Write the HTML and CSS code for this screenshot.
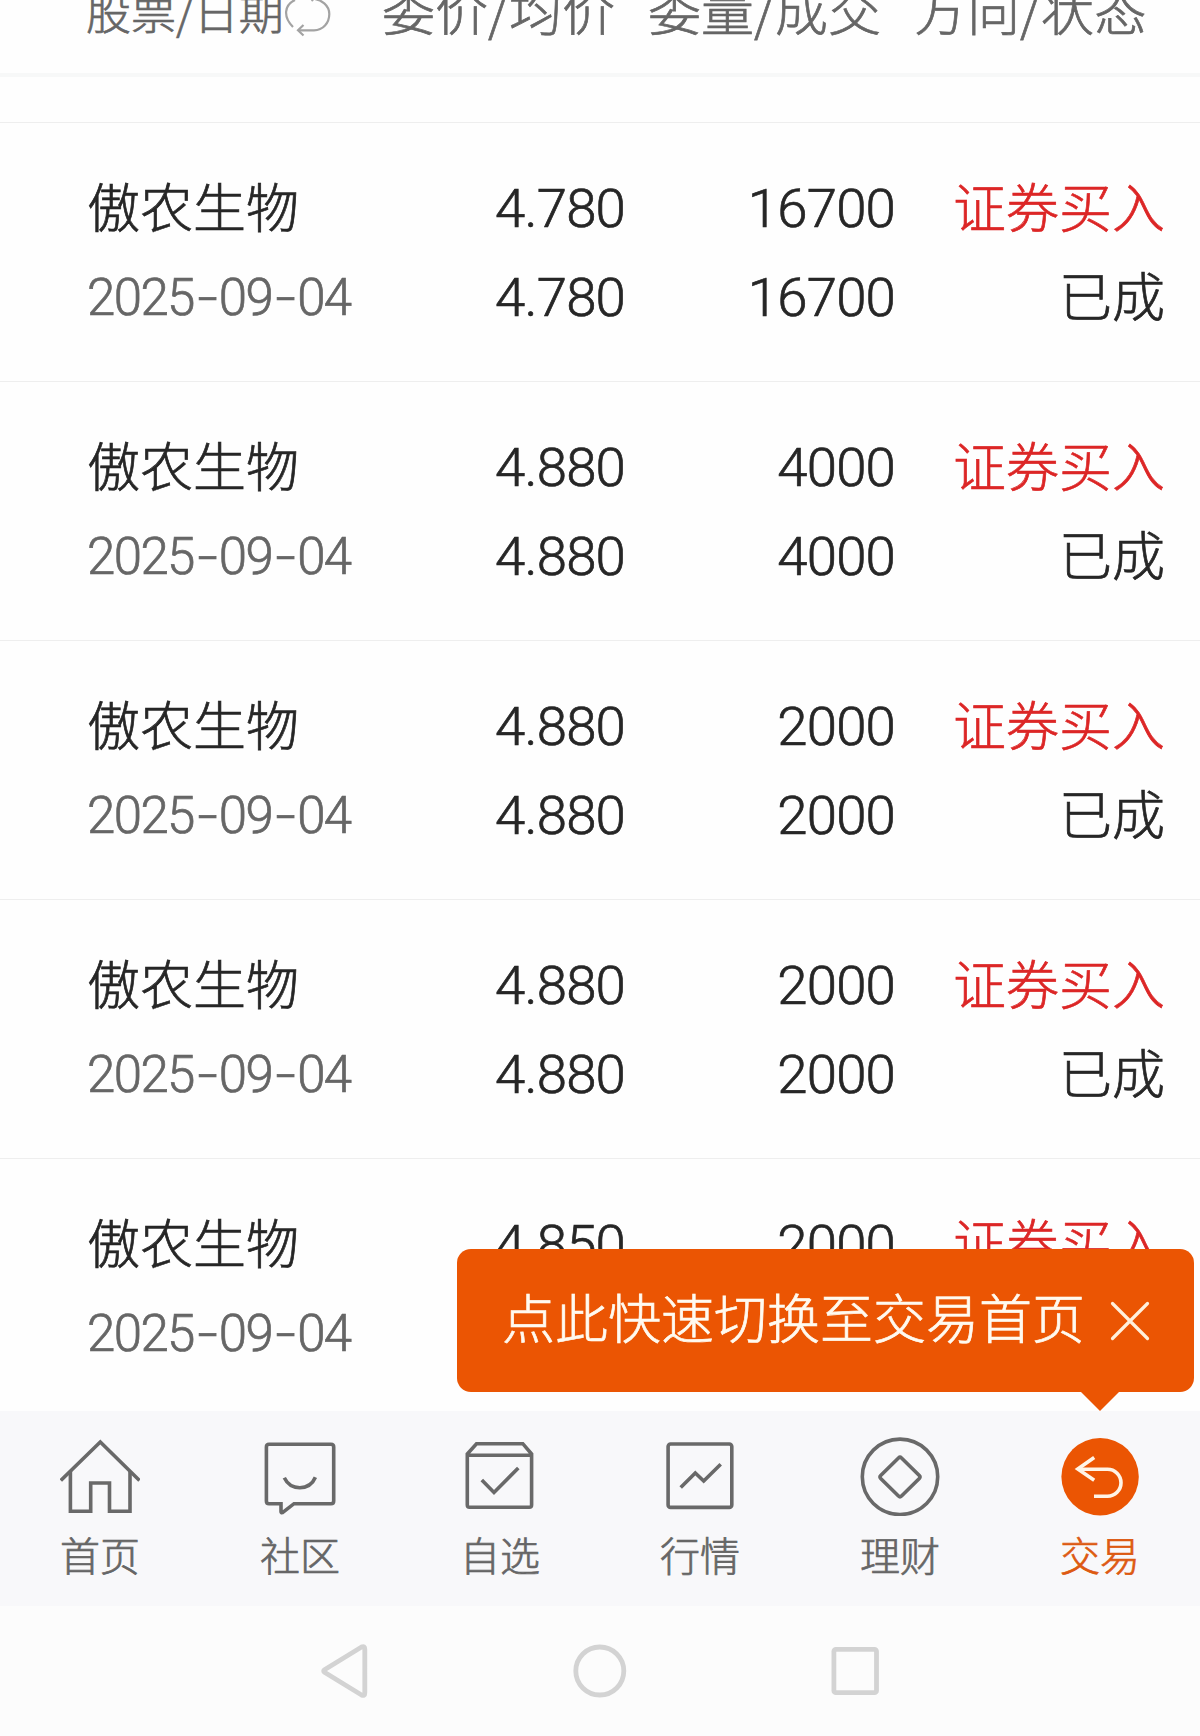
FILE: index.html
```html
<!DOCTYPE html>
<html lang="zh-CN">
<head>
	<meta charset="utf-8">
	<title>历史委托</title>
	<link rel="stylesheet" href="styles.css">
</head>
<body>
<div class="page">

	<!-- column titles -->
	<div class="list_head">
		<div class="head_stock">
			<span>股票/日期</span>
			<svg class="refresh" width="48" height="60" viewBox="0 0 48 60">
				<path d="M9 46 C-1 36 0 24 11 19"/>
				<path d="M29 20 L27 17.5 C38 18 45.3 25 45.3 33 C45.3 42 39 49.3 30 49.3 H14.5"/>
				<path d="M19.5 44 L14 49.3 L19.5 54.5"/>
			</svg>
		</div>
		<div class="head_price">委价/均价</div>
		<div class="head_count">委量/成交</div>
		<div class="head_state">方向/状态</div>
	</div>

	<!-- orders -->
	<div class="list">
		<div class="order">
			<div class="stock">傲农生物</div>
			<div class="num">4.780</div>
			<div class="num">16700</div>
			<div class="buy">证券买入</div>
			<div class="num date">2025<i>-</i>09<i>-</i>04</div>
			<div class="num">4.780</div>
			<div class="num">16700</div>
			<div>已成</div>
		</div>
		<div class="order">
			<div class="stock">傲农生物</div>
			<div class="num">4.880</div>
			<div class="num">4000</div>
			<div class="buy">证券买入</div>
			<div class="num date">2025<i>-</i>09<i>-</i>04</div>
			<div class="num">4.880</div>
			<div class="num">4000</div>
			<div>已成</div>
		</div>
		<div class="order">
			<div class="stock">傲农生物</div>
			<div class="num">4.880</div>
			<div class="num">2000</div>
			<div class="buy">证券买入</div>
			<div class="num date">2025<i>-</i>09<i>-</i>04</div>
			<div class="num">4.880</div>
			<div class="num">2000</div>
			<div>已成</div>
		</div>
		<div class="order">
			<div class="stock">傲农生物</div>
			<div class="num">4.880</div>
			<div class="num">2000</div>
			<div class="buy">证券买入</div>
			<div class="num date">2025<i>-</i>09<i>-</i>04</div>
			<div class="num">4.880</div>
			<div class="num">2000</div>
			<div>已成</div>
		</div>
		<div class="order">
			<div class="stock">傲农生物</div>
			<div class="num">4.850</div>
			<div class="num">2000</div>
			<div class="buy">证券买入</div>
			<div class="num date">2025<i>-</i>09<i>-</i>04</div>
		</div>
	</div>

	<!-- bottom tabs, the tip hangs above the last one -->
	<div class="tabs">
		<div class="tip">
			<span>点此快速切换至交易首页</span>
			<svg class="close" width="40" height="40" viewBox="0 0 40 40">
				<path d="M2.5 2.5 L37.5 37.5 M37.5 2.5 L2.5 37.5"/>
			</svg>
		</div>
		<div class="tab">
			<svg class="icon" width="80" height="80" viewBox="0 0 80 80">
				<path d="M.8 44.5 L40.3 6 L79.5 44.5"/>
				<path d="M10.4 35 V75.3 H30.7 V47 H49.5 V75.3 H70 V35"/>
			</svg>
			<span>首页</span>
		</div>
		<div class="tab">
			<svg class="icon" width="80" height="80" viewBox="0 0 80 80">
				<path d="M9 8.3 H71 Q73.7 8.3 73.7 11 V65 Q73.7 67.7 71 67.7 H34 L22.5 76.6 Q21 77 21 75.5 V67.7 H9 Q6.4 67.7 6.4 65 V11 Q6.4 8.3 9 8.3 Z"/>
				<path d="M24.3 41.7 Q29 51.5 39.8 51.7 Q51 51.5 55.4 41.2"/>
			</svg>
			<span>社区</span>
		</div>
		<div class="tab">
			<svg class="icon" width="80" height="80" viewBox="0 0 80 80">
				<path d="M7.3 18 L16.5 7.7 H62.8 L71.6 18 V69 Q71.6 71.3 69.3 71.3 H9.6 Q7.3 71.3 7.3 69 Z M7.3 19.3 H71.6"/>
				<path d="M21.8 44 L34 56.5 L58.3 32"/>
			</svg>
			<span>自选</span>
		</div>
		<div class="tab">
			<svg class="icon" width="80" height="80" viewBox="0 0 80 80">
				<rect x="8.1" y="8" width="63.7" height="63.4" rx="2.5"/>
				<path d="M20.7 51.5 L35.3 37 L43.7 45 L60.7 28.3"/>
			</svg>
			<span>行情</span>
		</div>
		<div class="tab">
			<svg class="icon" width="80" height="80" viewBox="0 0 80 80">
				<circle cx="40" cy="40.8" r="37.7"/>
				<path d="M38.5 22 Q40 20.5 41.5 22 L59.3 39.5 Q60.7 41 59.3 42.5 L41.5 60 Q40 61.5 38.5 60 L20.7 42.5 Q19.3 41 20.7 39.5 Z"/>
			</svg>
			<span>理财</span>
		</div>
		<div class="tab active">
			<svg class="icon" width="80" height="80" viewBox="0 0 80 80">
				<circle cx="40.1" cy="40.7" r="38.7"/>
				<path d="M18 33.3 H47.5 a13.5 13.5 0 0 1 0 27 H34"/>
				<path d="M34.2 21.5 L17.8 33 L34.2 44.3"/>
			</svg>
			<span>交易</span>
		</div>
	</div>

	<!-- system keys -->
	<div class="keys">
		<svg width="60" height="60" viewBox="0 0 60 60">
			<path d="M9.5 28.8 L46.5 6 Q49.8 4.5 49.8 8 V52 Q49.8 55.5 46.5 54 L9.5 31.2 Q7.8 30 9.5 28.8 Z"/>
		</svg>
		<svg width="60" height="60" viewBox="0 0 60 60">
			<circle cx="29.8" cy="30" r="24"/>
		</svg>
		<svg width="60" height="60" viewBox="0 0 60 60">
			<rect x="8.9" y="8.3" width="42.6" height="43.4" rx="2"/>
		</svg>
	</div>

</div>
</body>
</html>
```
FILE: styles.css
```css
* {
	box-sizing: border-box;
}
body {
	margin: 0;
	font-family: "Noto Sans CJK SC", "Noto Sans", sans-serif;
	font-weight: 300;
	-webkit-text-stroke: .7px currentColor;
	color: #262626;
	background: #fefefe;
}
.page {
	display: flex;
	flex-direction: column;
	width: 1200px;
	height: 1736px;
	overflow: hidden;
}
svg {
	display: block;
	fill: none;
}

/* the list is scrolled, so the titles are cut by the top edge */
.list_head {
	display: grid;
	grid-template-columns: 296px 232px 34px 232px 34px 232px;
	align-items: center;
	flex: none;
	height: 126px;
	margin-top: -49px;
	padding-left: 86px;
	padding-bottom: 8px;
	border-bottom: 4px solid #f7f8f8;
	font-size: 53px;
	line-height: 80px;
	color: #666;
	white-space: nowrap;
}
.head_stock {
	display: flex;
	align-items: center;
	padding-top: 5px;
	font-size: 45px;
}
.head_count {
	grid-column: 4;
}
.head_state {
	grid-column: 6;
}
.refresh {
	stroke: #a3a3a3;
	stroke-width: 2.2;
}

.list {
	flex: 1;
	min-height: 0;
	overflow: hidden;
	padding-top: 45px;
}
.order {
	display: grid;
	grid-template-columns: 337px 201px 270px 270px;
	height: 259px;
	padding: 38px 0 0 87px;
	border-top: 1px solid #eee;
	font-size: 53px;
	line-height: 89px;
	grid-auto-rows: 89px;
	text-align: right;
	white-space: nowrap;
}
.num {
	padding-top: 3px;
	font-family: Roboto, sans-serif;
	font-size: 54.5px;
	letter-spacing: -.8px;
}
.stock, .date {
	text-align: left;
}
.date {
	font-size: 51px;
	letter-spacing: -1.6px;
	color: #666;
}
.date i {
	display: inline-block;
	width: 25px;
	font-style: normal;
	text-align: center;
	transform: scaleX(1.4);
}
.buy {
	color: #dc2626;
}

.tabs {
	position: relative;
	display: grid;
	grid-template-columns: repeat(6, 1fr);
	flex: none;
	height: 195px;
	padding-top: 25px;
	background: #f8f8fa;
	font-size: 40px;
	line-height: 56px;
	color: #666;
}
.tab {
	display: flex;
	flex-direction: column;
	align-items: center;
	gap: 10px;
}
.icon {
	stroke: #696969;
	stroke-width: 3.6;
}
.active {
	color: #dd5a12;
}
.active circle {
	fill: #eb5503;
	stroke: none;
}
.active path {
	stroke: #fff4e6;
}
.tip {
	position: absolute;
	right: 6px;
	bottom: 100%;
	display: flex;
	align-items: center;
	justify-content: space-between;
	width: 737px;
	height: 143px;
	margin-bottom: 19px;
	padding: 0 44px 0 45px;
	border-radius: 14px;
	background: #eb5503;
	color: #fffaf0;
	font-size: 53px;
	line-height: 80px;
	white-space: nowrap;
}
.tip span {
	padding-bottom: 10px;
}
.tip::after {
	content: "";
	position: absolute;
	top: 100%;
	right: 75px;
	border: 19px solid transparent;
	border-top-color: #eb5503;
	border-bottom: 0;
}
.close {
	stroke: #fff0dc;
	stroke-width: 3.2;
	stroke-linecap: round;
}

.keys {
	display: grid;
	grid-template-columns: repeat(3, 255px);
	justify-content: center;
	justify-items: center;
	align-items: center;
	flex: none;
	height: 130px;
	background: #fcfcfc;
}
.keys svg {
	stroke: #d3d3d3;
	stroke-width: 4.8;
}
```
